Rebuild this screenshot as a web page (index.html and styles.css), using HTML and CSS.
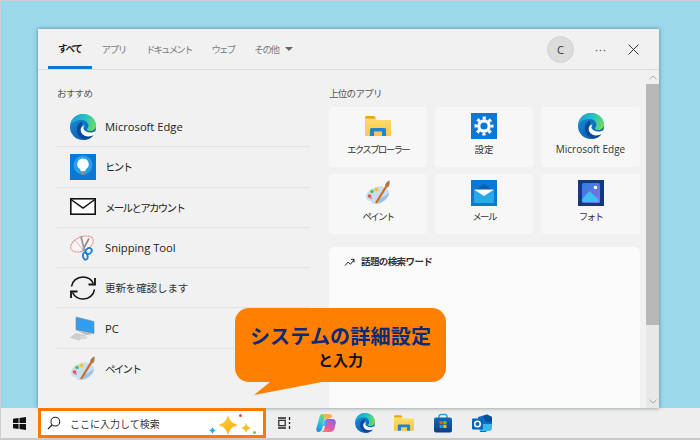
FILE: index.html
```html
<!DOCTYPE html>
<html lang="ja">
<head>
<meta charset="utf-8">
<title>Windows Search</title>
<link rel="stylesheet" href="styles.css">
</head>
<body>
<svg class="defs" aria-hidden="true">
  <defs>
    <linearGradient id="gEdgeB" x1="0" y1="0" x2="0.7" y2="1"><stop offset="0" stop-color="#1a8fdc"/><stop offset="1" stop-color="#0a5cae"/></linearGradient>
    <linearGradient id="gEdgeT" x1="0" y1="0.4" x2="1" y2="0.6"><stop offset="0" stop-color="#1b9fd8"/><stop offset="0.55" stop-color="#28c4c0"/><stop offset="1" stop-color="#6fdc5e"/></linearGradient>
    <linearGradient id="gFolder" x1="0" y1="0" x2="0" y2="1"><stop offset="0" stop-color="#ffdc74"/><stop offset="1" stop-color="#fbc841"/></linearGradient>
    <linearGradient id="gStar" x1="0" y1="0" x2="1" y2="1"><stop offset="0" stop-color="#ffd34d"/><stop offset="1" stop-color="#f7a800"/></linearGradient>
    <linearGradient id="gCop" x1="0" y1="1" x2="0.6" y2="0"><stop offset="0" stop-color="#1f7fe0"/><stop offset="0.55" stop-color="#2fc8d8"/><stop offset="1" stop-color="#7fd860"/></linearGradient>
    <linearGradient id="gCop2" x1="0" y1="1" x2="1" y2="0"><stop offset="0" stop-color="#f5a03c"/><stop offset="0.4" stop-color="#ee5c9a"/><stop offset="1" stop-color="#7a62ee"/></linearGradient>
    <linearGradient id="gPhoto" x1="0" y1="0" x2="1" y2="1"><stop offset="0" stop-color="#2a7fe0"/><stop offset="1" stop-color="#8a6fe0"/></linearGradient>
    <linearGradient id="gStore" x1="0" y1="0" x2="0" y2="1"><stop offset="0" stop-color="#1669b8"/><stop offset="1" stop-color="#0d3e7e"/></linearGradient>
    <symbol id="i-edge" viewBox="0 0 26 26">
      <circle cx="13" cy="13" r="13" fill="url(#gEdgeB)"/>
      <path d="M.3 11C1.500 4.500 6.800 0 13 0c7.500 0 13 5.200 13 11.500 0 3.600-2.800 5.500-5.800 5.500-2 0-3.400-.7-3.700-1.500 1-.9 1.900-2 1.900-3.700C18.400 8.400 15.400 6 11.800 6 6.800 6 2.500 8 .3 11z" fill="url(#gEdgeT)"/>
      <path d="M12.500 7.500C9 8.500 6.800 11.500 6.800 15.500c0 5 3.600 9.400 9 10.200 3.800-.6 6.300-2.300 8-4.600-1.800.9-3.800 1.300-5.600 1.200-4.500 0-7.500-3-7.500-6.300 0-2 1.200-3.400 1.800-8.500z" fill="#0a4a96"/>
      <path d="M10.700 15.700c0 3.800 3.400 6.700 7.500 6.700 2.100 0 4-.5 5.600-1.400.9-1.100 1.600-2.600 2-4-1.400.9-3.300 1.500-5.500 1.500-3.500 0-5.600-1.300-6.700-3.200-.3-1-.1-2.500.9-4-2.300 1-3.800 2.400-3.800 4.400z" fill="#fff"/>
    </symbol>
    <symbol id="i-hint" viewBox="0 0 26 26">
      <rect width="26" height="26" fill="#0a78d4"/>
      <circle cx="13" cy="11" r="9.500" fill="#2a9fe4"/>
      <path d="M13 4.500a5.700 5.700 0 0 1 3.400 10.300c-.8.700-1 1.500-1.100 2.400h-4.600c-.1-.9-.3-1.700-1.100-2.400A5.700 5.700 0 0 1 13 4.500z" fill="#fff"/>
      <rect x="10.800" y="17.600" width="4.400" height="3.200" rx="1" fill="#8c8c8c"/>
    </symbol>
    <symbol id="i-mail-o" viewBox="0 0 26 26">
      <rect x=".8" y="4.800" width="24.400" height="15.400" fill="#fff" stroke="#111" stroke-width="1.600"/>
      <path d="M1 5.500 13 14 25 5.500" fill="none" stroke="#111" stroke-width="1.500"/>
    </symbol>
    <symbol id="i-snip" viewBox="0 0 26 26">
      <ellipse cx="12" cy="9" rx="12" ry="7" transform="rotate(-24 12 9)" fill="#fdf3f3" stroke="#ec8f8f" stroke-width="1.100" stroke-dasharray="2.500 .5"/>
      <path d="M11 1.500 14.500 15.500M19 3.500 12.500 15.500" stroke="#8a8a8a" stroke-width="1.600" fill="none"/>
      <path d="M10 1 14 15 M6 6 13 15" stroke="#bcbcbc" stroke-width=".8" fill="none"/>
      <ellipse cx="18.700" cy="16" rx="2.700" ry="3.300" transform="rotate(50 18.700 16)" fill="none" stroke="#1a7fd6" stroke-width="1.800"/>
      <ellipse cx="15.300" cy="21.200" rx="2.300" ry="3.600" transform="rotate(-12 15.300 21.200)" fill="none" stroke="#1a7fd6" stroke-width="1.800"/>
    </symbol>
    <symbol id="i-refresh" viewBox="0 0 26 26">
      <path d="M1.500 11.500C2.300 6 7 2 13 2c4.500 0 8.500 2.500 10.500 6.500M24.500 14.500c-.8 5.500-5.500 9.500-11.500 9.500-4.500 0-8.500-2.500-10.500-6.500" fill="none" stroke="#111" stroke-width="1.600"/>
      <path d="M25 3v6.500h-6.500M1 23v-6.500h6.500" fill="none" stroke="#111" stroke-width="1.800"/>
    </symbol>
    <symbol id="i-pc" viewBox="0 0 26 26">
      <path d="M6 2 24 6.500V18.500L6 15z" fill="#2f9ef0"/>
      <path d="M6 2 24 6.500V18.500L6 15z" fill="none" stroke="#8a8a8a" stroke-width=".6"/>
      <path d="M7 15.500 23.500 19 16 20z" fill="#b8b8b8"/>
      <path d="M6 18.500 15 20.500 9.500 25 .5 22.500z" fill="#cfcfcf" stroke="#a8a8a8" stroke-width=".6" stroke-dasharray="1 .6"/>
      <path d="M12 20.500 18 22l-3 2.500-6-1.500z" fill="#d8d8d8"/>
    </symbol>
    <symbol id="i-paint" viewBox="0 0 26 26">
      <path d="M1 17C1 12 7 7 14 6.500c5.500-.3 9.500 2 10 6 .5 4.500-5 10-11.500 11.500C8 25 6 23.500 6.500 21 4 21 1 20 1 17z" fill="#c7dff2"/>
      <path d="M14 19c3-1.500 8-4 10-6.500.5 4-5 9.500-11.500 11.500C14 22.500 13 20.500 14 19z" fill="#9cc4e6"/>
      <circle cx="4.500" cy="16" r="1.800" fill="#e8504a"/><circle cx="7" cy="11.500" r="1.800" fill="#5cc04c"/><circle cx="11.500" cy="9.500" r="1.900" fill="#f5c232"/><circle cx="6" cy="18" r="1.100" fill="#e88080"/>
      <path d="M11 23 21.500 6" stroke="#d06a1e" stroke-width="2.200"/>
      <path d="M20 5.500c.5-2.500 2-4 4.500-5 .5 2.500 0 5-1.500 7z" fill="#a8794a"/>
    </symbol>
    <symbol id="i-folder" viewBox="0 0 26 26">
      <path d="M0 6a1.500 1.500 0 0 1 1.500-1.500H9.500L12 7H26V22a1 1 0 0 1-1 1H1a1 1 0 0 1-1-1z" fill="url(#gFolder)"/>
      <path d="M0 6a1.500 1.500 0 0 1 1.500-1.500H8.500a2 2 0 0 1 1.500 .7L11 7H0z" fill="#e8a516" transform="translate(0 -1.500)"/>
      <path d="M5 23V16.500A1.500 1.500 0 0 1 6.500 15H19.500A1.500 1.500 0 0 1 21 16.500V23H17V18.500H9V23z" fill="#1c86d2"/>
    </symbol>
    <symbol id="i-settings" viewBox="0 0 26 26">
      <rect width="26" height="26" fill="#0a78d4"/>
      <circle cx="13" cy="13" r="5.200" fill="none" stroke="#fff" stroke-width="3.200"/>
      <circle cx="13" cy="13" r="8" fill="none" stroke="#fff" stroke-width="3" stroke-dasharray="3.140 3.140" stroke-dashoffset="1.570"/>
    </symbol>
    <symbol id="i-mail" viewBox="0 0 26 26">
      <rect width="26" height="26" fill="#0a78d4"/>
      <path d="M3 11 13 4l10 7z" fill="#0a5fb0"/>
      <rect x="3" y="10" width="20" height="13" fill="#29aae8"/>
      <path d="M3 9.500H23L13 16z" fill="#fff"/>
    </symbol>
    <symbol id="i-photo" viewBox="0 0 26 26">
      <rect width="26" height="26" fill="#123a7c"/>
      <rect x="4" y="3" width="18" height="20" rx="1.500" fill="url(#gPhoto)"/>
      <circle cx="17.500" cy="7.500" r="1.800" fill="#fff"/>
      <path d="M4 19.500 11.500 11 20 19c1 1 .5 3-1 3H6c-1.500 0-3-1-2-2.500z" fill="#3cc0f0"/>
    </symbol>
    <symbol id="i-win" viewBox="0 0 14 14">
      <path d="M0 2 6 1.100V6.500H0zM7 1 14 0V6.500H7zM0 7.500H6V12.900L0 12zM7 7.500H14V14L7 13z" fill="#111"/>
    </symbol>
    <symbol id="i-search" viewBox="0 0 16 16">
      <circle cx="9.500" cy="6.500" r="5" fill="none" stroke="#222" stroke-width="1.200"/>
      <path d="M6 10 1 15" stroke="#222" stroke-width="1.400"/>
    </symbol>
    <symbol id="i-spark" viewBox="0 0 20 20">
      <path d="M10 0C11.800 6 14 8.200 20 10 14 11.800 11.800 14 10 20 8.200 14 6 11.800 0 10 6 8.200 8.200 6 10 0z" fill="url(#gStar)"/>
    </symbol>
    <symbol id="i-spark-b" viewBox="0 0 20 20">
      <path d="M10 0C11.800 6 14 8.200 20 10 14 11.800 11.800 14 10 20 8.200 14 6 11.800 0 10 6 8.200 8.200 6 10 0z" fill="#22a4ea"/>
    </symbol>
    <symbol id="i-task" viewBox="0 0 16 16">
      <path d="M2 3H10M2 13H10" stroke="#222" stroke-width="1.400"/>
      <rect x="2.800" y="5.300" width="6.400" height="5.400" fill="none" stroke="#222" stroke-width="1.200"/>
      <path d="M13.500 2V5M13.500 7V9M13.500 11V14" stroke="#222" stroke-width="1.300"/>
    </symbol>
    <symbol id="i-copilot" viewBox="0 0 20 20">
      <path d="M7 1h5c-2 0-2.800 1.500-3.300 3.500L6.500 15c-.5 2.300-1.800 4-4 4C.5 19 0 17 .5 15L3.500 4C4 2 5 1 7 1z" fill="url(#gCop)"/>
      <path d="M7 1h6c2 0 3 1 3.500 3L12 6H9z" fill="#f6b44a"/>
      <path d="M10.500 6h5.500c2.500 0 4.200 1.500 3.800 4l-1.300 5.500c-.5 2.200-2.200 3.500-4.500 3.500H4c2 0 3.700-1 4.300-3.500z" fill="url(#gCop2)"/>
      <path d="M8.500 6.500h4.500L11 13H7z" fill="#5c8cf0" opacity=".8"/>
    </symbol>
    <symbol id="i-store" viewBox="0 0 20 20">
      <path d="M6 5V3.500a2 2 0 0 1 2-2h4a2 2 0 0 1 2 2V5" fill="none" stroke="#2aa0d8" stroke-width="1.400"/>
      <rect x="1" y="4.500" width="18" height="15" rx="2" fill="url(#gStore)"/>
      <rect x="6.500" y="8" width="3.200" height="3.200" fill="#f25022"/><rect x="10.300" y="8" width="3.200" height="3.200" fill="#7fba00"/>
      <rect x="6.500" y="11.800" width="3.200" height="3.200" fill="#00a4ef"/><rect x="10.300" y="11.800" width="3.200" height="3.200" fill="#ffb900"/>
    </symbol>
    <symbol id="i-outlook" viewBox="0 0 20 20">
      <path d="M6 4 15 1.500 20 4V12L14 19H8z" fill="#0f6cc4"/>
      <path d="M8 11H20V15C20 17 19 18 17 18H8z" fill="#35b8ee"/>
      <path d="M11 3 15 1.500 20 4V9H14z" fill="#0a4f9c"/>
      <rect x="0" y="5.500" width="11" height="11" rx="1" fill="#0a64b8"/>
      <circle cx="5.500" cy="11" r="2.800" fill="none" stroke="#fff" stroke-width="1.500"/>
    </symbol>
  </defs>
</svg>

<div class="desktop">
  <div class="stage">
    <section class="window">
      <header class="win-head">
        <nav class="tabs">
          <span class="tab tab-on">すべて</span>
          <span class="tab tab-loose">アプリ</span>
          <span class="tab">ドキュメント</span>
          <span class="tab">ウェブ</span>
          <span class="tab tab-loose">その他<i class="caret"></i></span>
        </nav>
        <div class="win-tools">
          <span class="avatar">C</span>
          <span class="dots">···</span>
          <svg class="close" viewBox="0 0 11 11"><path d="M.5.500l10 10M10.500.500l-10 10" stroke="#333" stroke-width="1" fill="none"/></svg>
        </div>
      </header>
      <div class="win-body">
        <div class="col-left">
          <h2 class="sec-title">おすすめ</h2>
          <ul class="list">
            <li class="row"><svg class="ico26"><use href="#i-edge"/></svg><span class="latin">Microsoft Edge</span></li>
            <li class="row"><svg class="ico26"><use href="#i-hint"/></svg><span class="kana">ヒント</span></li>
            <li class="row"><svg class="ico26"><use href="#i-mail-o"/></svg><span class="kana">メールとアカウント</span></li>
            <li class="row"><svg class="ico26"><use href="#i-snip"/></svg><span class="latin">Snipping Tool</span></li>
            <li class="row"><svg class="ico26"><use href="#i-refresh"/></svg><span class="mixed">更新を確認します</span></li>
            <li class="row"><svg class="ico26"><use href="#i-pc"/></svg><span class="latin">PC</span></li>
            <li class="row row-last"><svg class="ico26"><use href="#i-paint"/></svg><span class="kana">ペイント</span></li>
          </ul>
        </div>
        <div class="col-right">
          <h2 class="sec-title">上位のアプリ</h2>
          <div class="cards">
            <div class="card"><svg class="ico26"><use href="#i-folder"/></svg><span class="card-label kana">エクスプローラー</span></div>
            <div class="card"><svg class="ico26"><use href="#i-settings"/></svg><span class="card-label">設定</span></div>
            <div class="card"><svg class="ico26"><use href="#i-edge"/></svg><span class="card-label latin-s">Microsoft Edge</span></div>
            <div class="card"><svg class="ico26"><use href="#i-paint"/></svg><span class="card-label kana">ペイント</span></div>
            <div class="card"><svg class="ico26"><use href="#i-mail"/></svg><span class="card-label kana">メール</span></div>
            <div class="card"><svg class="ico26"><use href="#i-photo"/></svg><span class="card-label kana">フォト</span></div>
          </div>
          <div class="trend">
            <svg class="trend-ico" viewBox="0 0 12 10"><path d="M1 8.500 4.500 4.500 7 7l4-5M7.500 1.500H11V5" fill="none" stroke="#222" stroke-width="1.100"/></svg>
            <span class="trend-title">話題の検索ワード</span>
          </div>
        </div>
        <div class="scrollbar">
          <span class="sb-btn"><svg class="sb-arrow" viewBox="0 0 9 5"><path d="M.5 4.500 4.500 .800 8.500 4.500" fill="none" stroke="#a0a0a0"/></svg></span>
          <span class="sb-thumb"></span>
          <span class="sb-track"><svg class="sb-arrow" viewBox="0 0 9 5"><path d="M.5 .500 4.500 4.200 8.500 .500" fill="none" stroke="#a0a0a0"/></svg></span>
        </div>
      </div>
    </section>
    <div class="callout">
      <svg class="callout-tail" viewBox="0 0 70 16"><path d="M16 0 0 13 68 0z" fill="#ff8000"/></svg>
      <p class="callout-main">システムの詳細設定</p>
      <p class="callout-sub">と入力</p>
    </div>
  </div>
  <footer class="taskbar">
    <span class="start"><svg class="ico-win"><use href="#i-win"/></svg></span>
    <div class="searchbox">
      <svg class="ico-search"><use href="#i-search"/></svg>
      <span class="search-text">ここに入力して検索</span>
      <span class="sparkles">
        <svg class="sp sp-big"><use href="#i-spark"/></svg>
        <svg class="sp sp-small"><use href="#i-spark"/></svg>
        <svg class="sp sp-blue"><use href="#i-spark-b"/></svg>
        <i class="dot dot-red"></i>
        <i class="dot dot-green"></i>
      </span>
    </div>
    <div class="task-icons">
      <svg class="ti ti-task"><use href="#i-task"/></svg>
      <svg class="ti"><use href="#i-copilot"/></svg>
      <svg class="ti"><use href="#i-edge"/></svg>
      <svg class="ti"><use href="#i-folder"/></svg>
      <svg class="ti"><use href="#i-store"/></svg>
      <svg class="ti"><use href="#i-outlook"/></svg>
    </div>
  </footer>
</div>
</body>
</html>
```
FILE: styles.css
```css
* { box-sizing: border-box; }
html, body { margin: 0; padding: 0; }
body {
  width: 700px;
  height: 440px;
  overflow: hidden;
  font-family: "Noto Sans CJK JP", "Noto Sans", sans-serif;
  color: #222;
}
.defs { display: block; width: 0; height: 0; }
.desktop {
  width: 700px;
  height: 440px;
  display: flex;
  flex-direction: column;
  background: #9bd9ea;
  box-shadow: inset 1px 1px 0 #cfcfcf;
}
.stage { position: relative; height: 408px; flex: none; }
.window {
  position: absolute;
  left: 38px;
  top: 29px;
  width: 621px;
  height: 379px;
  display: flex;
  flex-direction: column;
  background: #f1f1f1;
  box-shadow: 0 0 4px rgba(40, 70, 80, .6);
}
.win-head {
  height: 41px;
  flex: none;
  display: flex;
  justify-content: space-between;
  border-bottom: 1px solid #dcdcdc;
  padding-left: 10px;
}
.tabs { display: flex; }
.tab {
  display: flex;
  align-items: center;
  font-size: 9.500px;
  letter-spacing: -1.900px;
  color: #7a7a7a;
  padding: 0 10px;
  height: 39px;
}
.tab-loose { letter-spacing: -1.400px; }
.tab-on { color: #1e1e1e; font-weight: 700; letter-spacing: -1.300px; border-bottom: 3px solid #0a78d4; height: 40px; }
.caret {
  margin-left: 6px;
  width: 0;
  height: 0;
  border: 4.500px solid transparent;
  border-top: 4.500px solid #666;
  border-bottom: 0;
}
.win-tools { display: flex; align-items: center; padding-right: 20px; }
.avatar {
  width: 27px;
  height: 27px;
  border-radius: 50%;
  background: #dcdcdc;
  border: 1px solid #d2d2d2;
  font-family: "Open Sans", sans-serif;
  font-size: 11px;
  display: flex;
  align-items: center;
  justify-content: center;
  color: #333;
}
.dots { margin-left: 21px; font-family: "Noto Sans", sans-serif; font-size: 11px; color: #555; letter-spacing: 1px; width: 15px; }
.close { margin-left: 18px; width: 11px; height: 11px; }
.win-body { flex: 1; display: flex; min-height: 0; }
.col-left { width: 272px; padding-left: 19px; flex: none; }
.sec-title {
  margin: 0;
  font-size: 9.500px;
  font-weight: 400;
  letter-spacing: -.7px;
  color: #555;
  height: 37px;
  line-height: 12px;
  padding-top: 17px;
}
.list { list-style: none; margin: 0; padding: 0; }
.row {
  height: 40.300px;
  display: flex;
  align-items: center;
  gap: 9px;
  padding-left: 13px;
  border-bottom: 1.500px solid #e3e3e3;
  font-size: 11px;
  color: #222;
}
.row-last { border-bottom: 0; }
.ico26 { width: 26px; height: 26px; flex: none; display: block; }
.latin { font-family: "Open Sans", sans-serif; font-size: 11.200px; }
.kana { letter-spacing: -1.700px; font-size: 10.500px; }
.mixed { font-size: 10.500px; letter-spacing: -.1px; color: #333; }
.col-right { width: 311px; margin-left: 19px; display: flex; flex-direction: column; flex: none; }
.cards { display: grid; grid-template-columns: 98px 98px 99px; grid-auto-rows: 60px; column-gap: 8px; row-gap: 7px; }
.card {
  background: #f7f7f7;
  border-radius: 4px;
  display: flex;
  flex-direction: column;
  align-items: center;
  padding-top: 6px;
}
.card-label { font-size: 9.500px; line-height: 14px; margin-top: 3px; color: #333; }
.card-label.kana { font-size: 9.500px; letter-spacing: -1.700px; }
.latin-s { font-family: "Open Sans", sans-serif; font-size: 10px; }
.trend {
  flex: 1;
  margin-top: 13px;
  background: #fbfbfb;
  border-radius: 5px 5px 0 0;
  padding: 7px 0 0 15px;
  display: flex;
  align-items: flex-start;
  gap: 6px;
}
.trend-ico { width: 11px; height: 9px; margin-top: 4px; }
.trend-title { font-size: 9.500px; line-height: 14px; font-weight: 700; letter-spacing: -.6px; color: #333; }
.scrollbar { width: 13px; margin-left: 6px; flex: none; display: flex; flex-direction: column; }
.sb-btn { height: 14px; background: #f0f0f0; display: flex; align-items: center; justify-content: center; flex: none; }
.sb-thumb { height: 241px; background: #b8b8b8; flex: none; }
.sb-track { flex: 1; background: #e8e8e8; display: flex; align-items: flex-end; justify-content: center; padding-bottom: 4px; }
.sb-arrow { width: 8px; height: 5px; display: block; }
.callout {
  position: absolute;
  left: 235px;
  top: 308px;
  width: 211px;
  height: 74px;
  background: #ff8000;
  border-radius: 14px;
  text-align: center;
}
.callout-tail { position: absolute; left: 19px; top: 74px; width: 70px; height: 16px; overflow: visible; }
.callout-main { margin: 15px 0 0; font-size: 20px; line-height: 26px; font-weight: 700; letter-spacing: .2px; color: #0b2a78; }
.callout-sub { margin: 2px 0 0; font-size: 15px; line-height: 18px; font-weight: 700; color: #111; }
.taskbar {
  height: 32px;
  flex: none;
  display: flex;
  background: #eeeeee;
  border-bottom: 2px solid #c9c9c9;
  border-left: 1px solid #d0d0d0;
}
.start { width: 37px; flex: none; display: flex; align-items: center; justify-content: center; }
.ico-win { width: 13px; height: 13px; margin-top: 1px; }
.searchbox {
  position: relative;
  width: 228px;
  height: 30px;
  flex: none;
  background: #fff;
  border: 3px solid #f57c00;
  display: flex;
  align-items: center;
  padding-left: 6px;
}
.ico-search { width: 14px; height: 14px; flex: none; }
.search-text { margin-left: 9px; font-size: 10px; color: #333; }
.sparkles { position: absolute; inset: 0; }
.sp { position: absolute; }
.sp-big { width: 20px; height: 20px; left: 177px; top: 4px; }
.sp-small { width: 10px; height: 10px; left: 200px; top: 12px; }
.sp-blue { width: 7px; height: 7px; left: 168px; top: 16px; }
.dot { position: absolute; width: 3px; height: 3px; border-radius: 50%; }
.dot-red { background: #e8502a; left: 198px; top: 3px; }
.dot-green { background: #7cc23a; left: 212px; top: 20px; }
.task-icons { display: flex; align-items: center; margin-left: 10px; gap: 19px; height: 30px; }
.ti { width: 20px; height: 20px; flex: none; }
.ti-task { width: 16px; height: 16px; margin-right: 5px; }
```
